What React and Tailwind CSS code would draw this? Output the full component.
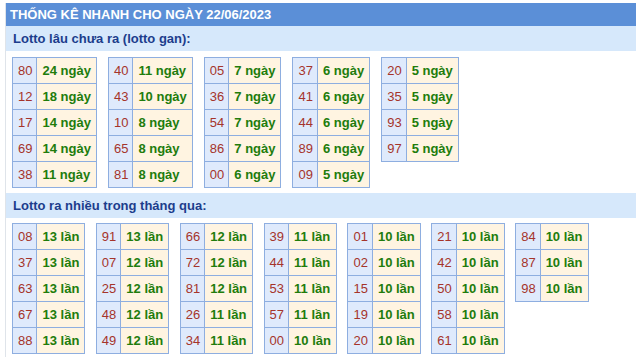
import React from "react";

const gan = [
  [["80", 24], ["12", 18], ["17", 14], ["69", 14], ["38", 11]],
  [["40", 11], ["43", 10], ["10", 8], ["65", 8], ["81", 8]],
  [["05", 7], ["36", 7], ["54", 7], ["86", 7], ["00", 6]],
  [["37", 6], ["41", 6], ["44", 6], ["89", 6], ["09", 5]],
  [["20", 5], ["35", 5], ["93", 5], ["97", 5]],
];

const nhieu = [
  [["08", 13], ["37", 13], ["63", 13], ["67", 13], ["88", 13]],
  [["91", 13], ["07", 12], ["25", 12], ["48", 12], ["49", 12]],
  [["66", 12], ["72", 12], ["81", 12], ["26", 11], ["34", 11]],
  [["39", 11], ["44", 11], ["53", 11], ["57", 11], ["00", 10]],
  [["01", 10], ["02", 10], ["15", 10], ["19", 10], ["20", 10]],
  [["21", 10], ["42", 10], ["50", 10], ["58", 10], ["61", 10]],
  [["84", 10], ["87", 10], ["98", 10]],
];

function Box({ rows, unit }) {
  return (
    <div className="grid grid-cols-[auto_auto] self-start border-l border-t border-[#8eaee0]">
      {rows.map(([n, v]) => (
        <React.Fragment key={n}>
          <div className="h-[26px] pl-[5px] pr-[4px] flex items-center border-r border-b border-[#8eaee0] bg-[#dfeafc] text-[#a5342b]">
            {n}
          </div>
          <div className="h-[26px] px-[5px] flex items-center border-r border-b border-[#8eaee0] bg-[#fff4e1] text-[#217c0c] font-bold">
            {v} {unit}
          </div>
        </React.Fragment>
      ))}
    </div>
  );
}

export default function App() {
  return (
    <div
      className="w-[636px] h-[357px] bg-white pl-[5px] pt-[3px] overflow-hidden text-[13px] leading-[15px]"
      style={{ fontFamily: '"Liberation Sans", Arial, sans-serif' }}
    >
      <div className="border-l border-[#dfe4ea] h-full">
        <div className="h-[23px] bg-[#5b8fd7] text-white font-bold flex items-center pl-[4px]">
          THỐNG KÊ NHANH CHO NGÀY 22/06/2023
        </div>
        <div className="h-[25px] bg-[#d6e8fb] text-[#1c3d8c] font-bold flex items-center pl-[7px]">
          Lotto lâu chưa ra (lotto gan):
        </div>
        <div className="flex gap-[11px] pl-[6px] mt-[6px]">
          {gan.map((t, i) => (
            <Box key={i} rows={t} unit="ngày" />
          ))}
        </div>
        <div className="h-[25px] mt-[5px] bg-[#d6e8fb] text-[#1c3d8c] font-bold flex items-center pl-[7px]">
          Lotto ra nhiều trong tháng qua:
        </div>
        <div className="flex gap-[10.5px] pl-[6px] mt-[5px]">
          {nhieu.map((t, i) => (
            <Box key={i} rows={t} unit="lần" />
          ))}
        </div>
      </div>
    </div>
  );
}
